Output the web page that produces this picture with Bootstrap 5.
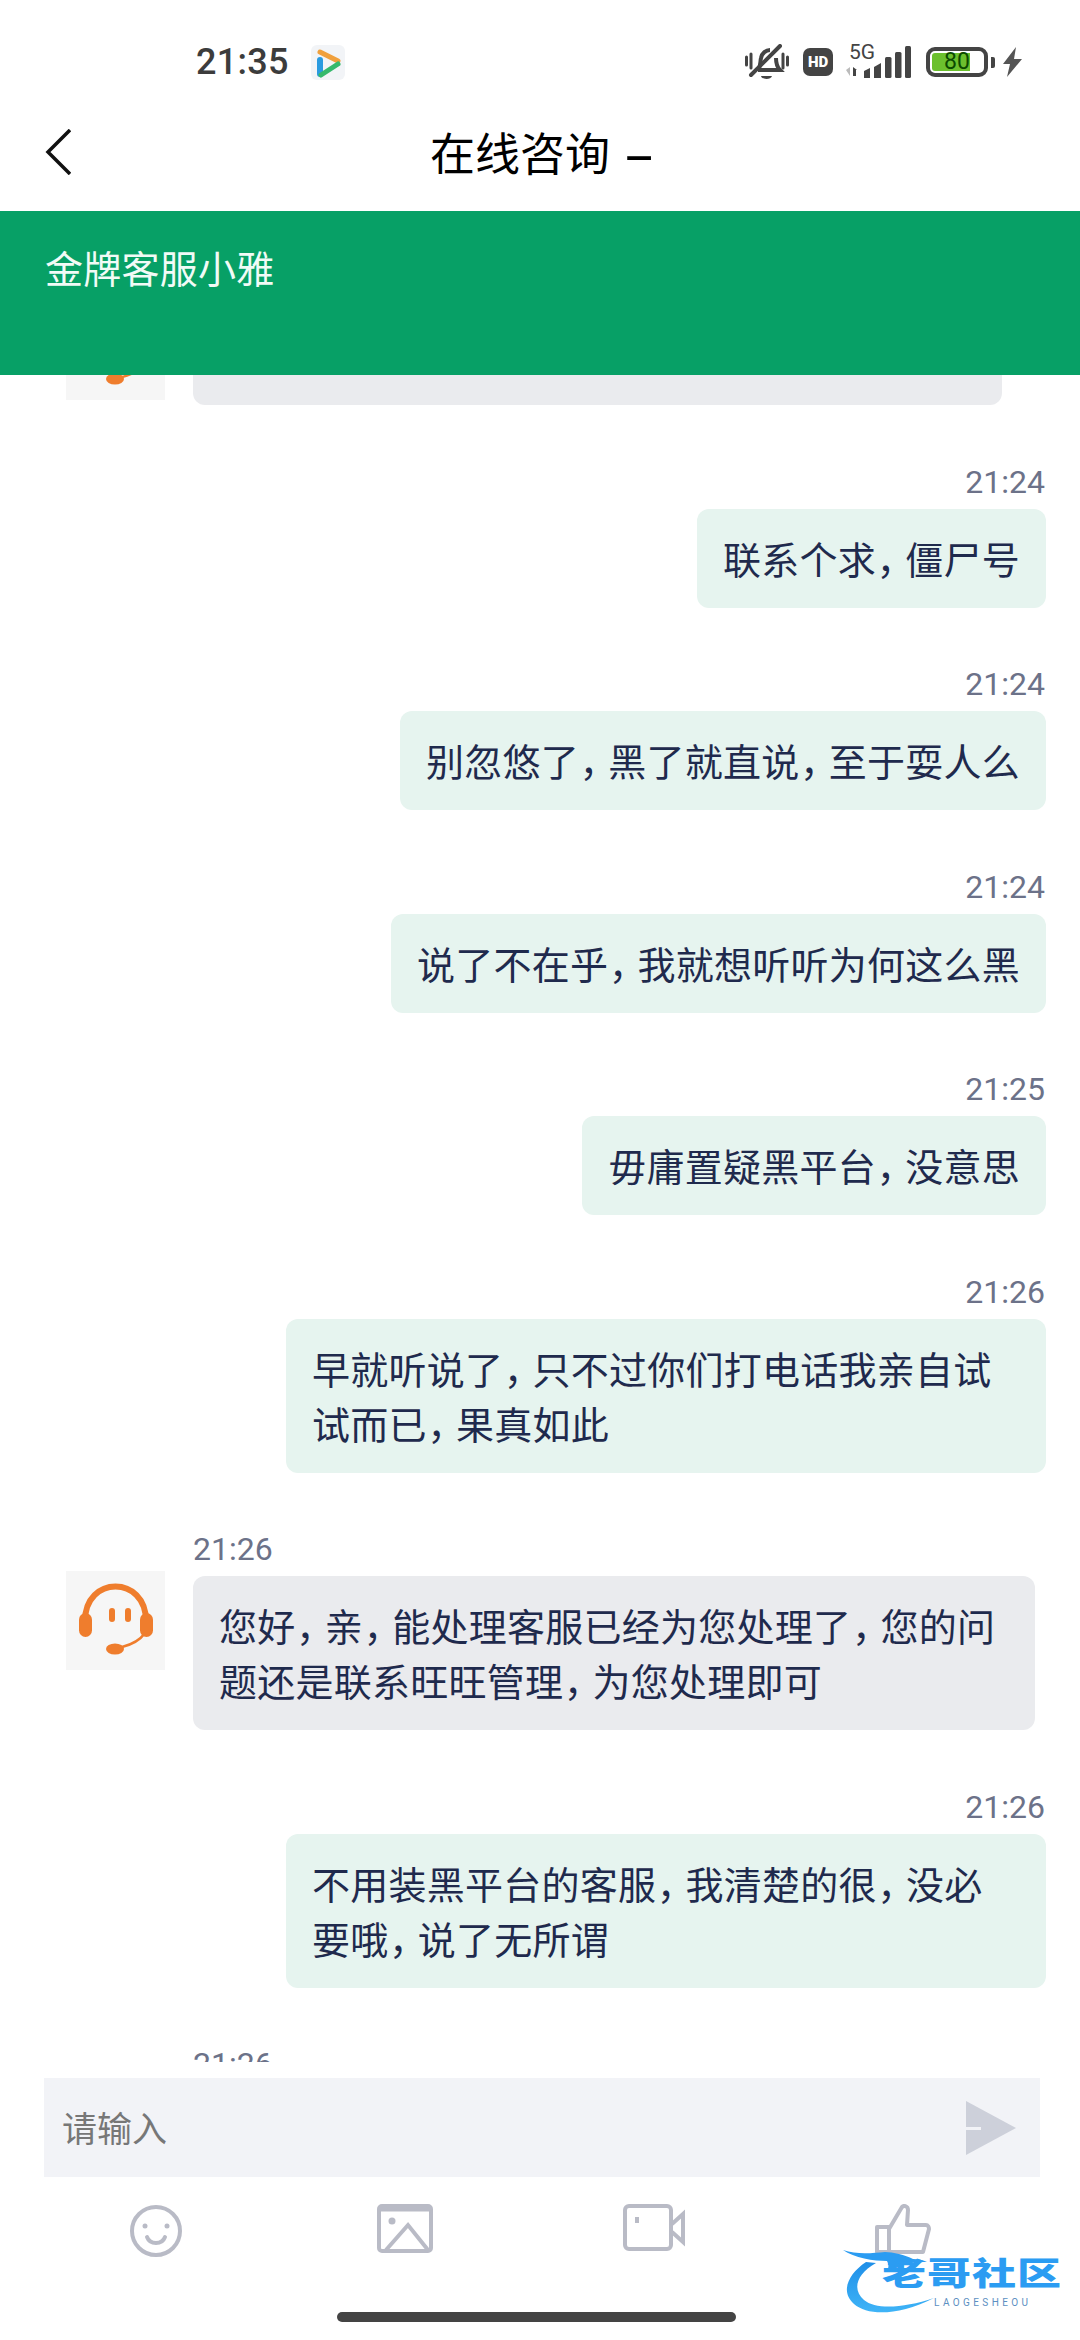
<!DOCTYPE html>
<html lang="zh-CN">
<head>
  <meta charset="UTF-8">
  <meta name="viewport" content="width=device-width, initial-scale=1">
  <title>在线咨询</title>
  <link href="https://cdn.jsdelivr.net/npm/bootstrap@5.3.0/dist/css/bootstrap.min.css" rel="stylesheet">
  <style>
    body { margin: 0; background: #fff; font-family: "Noto Sans CJK SC", "Noto Sans", sans-serif; }
    .phone { width: 1080px; height: 2340px; }
    .status-row { height: 124px; padding: 0 58px 0 196px; color: #3c3c3c; }
    .clock { font: 500 36px/1 Roboto, sans-serif; letter-spacing: .3px; }
    .app-ico { margin-left: 22px; }
    .hd-chip { width: 30px; height: 28px; margin: 0 12px 0 14px; border-radius: 7px; background: #444; color: #fff; font: 900 15px/28px Roboto, sans-serif; text-align: center; }
    .sig-box { width: 66px; height: 34px; }
    .five-g { left: 4px; top: -3px; font: 400 21px/1 Roboto, sans-serif; color: #444; }
    .batt { width: 62px; height: 30px; margin-left: 15px; padding: 2px; border: 4px solid #444; border-radius: 9px; }
    .batt-fill { height: 100%; border-radius: 3px 0 0 3px; background: #6cc02e; }
    .batt-num { left: 0; right: 0; top: 0; font: 400 23px/22px Roboto, sans-serif; color: #0b4a00; text-align: center; }
    .batt-nub { width: 4px; height: 11px; margin: 0 8px 0 3px; border-radius: 0 2px 2px 0; background: #444; }
    .nav-row { height: 87px; padding: 0 45px 31px; }
    .nav-side { width: 26px; }
    .nav-title { font-size: 45px; line-height: 56px; color: #000; }
    .nav-dash { display: inline-block; margin: 0 3px 0 11px; transform: scaleX(2); font-weight: 500; }
    .agent-band { height: 164px; padding: 31px 45px 0; background: #07a066; color: #f1fbf6; font-size: 38px; line-height: 50px; letter-spacing: .25px; }
    .chat { min-height: 0; }
    .msg { margin-bottom: 57.5px; }
    .msg:first-child { margin-top: -115px; }
    .msg-right { padding-right: 34px; }
    .msg-left { padding-left: 66px; gap: 28px; }
    .msg-cut { padding-left: 193px; }
    .stamp { height: 38px; margin-bottom: 8px; padding-right: 1px; font: 400 32px/38px Roboto, sans-serif; color: #6c7289; }
    .bubble { padding: 21px 26px 23px; border-radius: 12px; font-size: 38px; line-height: 55px; letter-spacing: .25px; color: #1f2a4d; font-feature-settings: "palt"; }
    .pun { padding: 0 7px 0 3px; }
    .bubble-out { background: #e6f4ef; }
    .bubble-out-wide { width: 760px; }
    .bubble-in { background: #eaebee; }
    .bubble-in-wide { width: 842px; }
    .bubble-top { width: 809px; }
    .face { width: 99px; height: 99px; margin-top: 41px; background: #f6f6f6; }
    .composer { height: 278px; padding-top: 16px; }
    .input-box { width: 996px; height: 99px; margin-left: 44px; padding: 0 24px 0 18px; background: #f2f3f7; }
    .input-box .form-control { padding: 0; border: 0; border-radius: 0; background: transparent; box-shadow: none; font-size: 35px; color: #333; }
    .input-box .form-control::placeholder { color: #777; opacity: 1; }
    .tools { width: 996px; height: 52px; margin: 27px 0 0 31px; }
    .home-bar { width: 399px; height: 10px; margin: 56px 0 0 337px; border-radius: 5px; background: #444; }
    .wm { left: 842px; top: 2248px; width: 226px; height: 72px; }
    .wm-name { left: 40px; top: 7px; font-size: 44px; line-height: 44px; font-weight: 900; letter-spacing: 1px; color: #2b9cf2; white-space: nowrap; transform: scaleY(.72); transform-origin: top left; }
    .wm-sub { left: 92px; top: 49px; font: 400 10px/11px Roboto, sans-serif; letter-spacing: 3.4px; color: #5d8fc2; white-space: nowrap; }
  </style>
</head>
<body>
  <div class="phone position-relative d-flex flex-column overflow-hidden">

    <div class="status-row d-flex align-items-center flex-shrink-0">
      <span class="clock">21:35</span>
      <svg class="app-ico" width="34" height="35" viewBox="0 0 34 35">
        <rect width="34" height="35" rx="6" fill="#f2f4f7"/>
        <path d="M9 7 27 16" stroke="#f0a03c" stroke-width="5" stroke-linecap="round"/>
        <path d="M9 15V29" stroke="#2a9be0" stroke-width="6" stroke-linecap="round"/>
        <path d="M10 30 27 19" stroke="#35b96c" stroke-width="5" stroke-linecap="round"/>
      </svg>
      <div class="ms-auto d-flex align-items-center">
        <svg width="44" height="37" viewBox="0 0 44 37" fill="none" stroke="#444">
          <path d="M1.5 13v8M6 10v14M38 10v14M42.5 13v8" stroke-width="3" stroke-linecap="round"/>
          <path d="M13 26c3-4 2-8 3-12 1-5 5-8 9-8M31 14c0 5 1 9 4 12H13" stroke-width="4"/>
          <path d="M6 31 35 2" stroke-width="4" stroke-linecap="round"/>
          <path d="M16 32h11c-1 4-10 4-11 0Z" fill="#444" stroke="none"/>
        </svg>
        <div class="hd-chip">HD</div>
        <div class="sig-box position-relative">
          <span class="five-g position-absolute">5G</span>
          <svg class="d-block" width="66" height="34" viewBox="0 0 66 34">
            <path d="M1 25l4-3v9z" fill="#bbb"/>
            <path d="M8 31v-9l4 3h-1v6z" fill="#444"/>
            <g fill="#444">
              <path d="M19 26l6-3v10h-6z"/>
              <path d="M29 22l7-4v15h-7z"/>
              <rect x="40" y="12" width="6.5" height="21" rx="1.5"/>
              <rect x="50" y="7" width="6.5" height="26" rx="1.5"/>
              <rect x="60" y="1" width="6" height="32" rx="1.5"/>
            </g>
          </svg>
        </div>
        <div class="batt position-relative">
          <div class="batt-fill w-75"></div>
          <div class="batt-num position-absolute">80</div>
        </div>
        <div class="batt-nub"></div>
        <svg width="19" height="30" viewBox="0 0 19 30"><path d="M13 0 0 17h7L4 30 19 12h-8z" fill="#555"/></svg>
      </div>
    </div>

    <div class="nav-row d-flex align-items-center flex-shrink-0">
      <svg class="nav-side" width="26" height="46" viewBox="0 0 26 46" fill="none"><path d="M25 1 3 23l22 22" stroke="#111" stroke-width="3.5"/></svg>
      <div class="nav-title flex-grow-1 text-center">在线咨询 <span class="nav-dash">-</span></div>
      <div class="nav-side"></div>
    </div>

    <div class="agent-band flex-shrink-0">金牌客服小雅</div>

    <div class="chat flex-grow-1 overflow-hidden">
      <div class="msg msg-left d-flex">
        <div class="face flex-shrink-0">
          <svg class="d-block" width="99" height="99" viewBox="0 0 99 99"><use href="#agent"/></svg>
        </div>
        <div>
          <div class="stamp">&nbsp;</div>
          <div class="bubble bubble-in bubble-top">&nbsp;</div>
        </div>
      </div>

      <div class="msg msg-right d-flex flex-column align-items-end">
        <div class="stamp">21:24</div>
        <div class="bubble bubble-out">联系个求<span class="pun">，</span>僵尸号</div>
      </div>
      <div class="msg msg-right d-flex flex-column align-items-end">
        <div class="stamp">21:24</div>
        <div class="bubble bubble-out">别忽悠了<span class="pun">，</span>黑了就直说<span class="pun">，</span>至于耍人么</div>
      </div>
      <div class="msg msg-right d-flex flex-column align-items-end">
        <div class="stamp">21:24</div>
        <div class="bubble bubble-out">说了不在乎<span class="pun">，</span>我就想听听为何这么黑</div>
      </div>
      <div class="msg msg-right d-flex flex-column align-items-end">
        <div class="stamp">21:25</div>
        <div class="bubble bubble-out">毋庸置疑黑平台<span class="pun">，</span>没意思</div>
      </div>
      <div class="msg msg-right d-flex flex-column align-items-end">
        <div class="stamp">21:26</div>
        <div class="bubble bubble-out bubble-out-wide">早就听说了<span class="pun">，</span>只不过你们打电话我亲自试<br>试而已<span class="pun">，</span>果真如此</div>
      </div>

      <div class="msg msg-left d-flex">
        <div class="face flex-shrink-0">
          <svg class="d-block" width="99" height="99" viewBox="0 0 99 99">
            <g id="agent">
              <path d="M19 50C19 4 80 4 80 50" fill="none" stroke="#ef7d2d" stroke-width="6"/>
              <rect x="13" y="42" width="13" height="24" rx="6.5" fill="#ef7d2d"/>
              <rect x="74" y="42" width="13" height="24" rx="6.5" fill="#ef7d2d"/>
              <rect x="43" y="37" width="6" height="14" rx="3" fill="#ef7d2d"/>
              <rect x="59" y="37" width="6" height="14" rx="3" fill="#ef7d2d"/>
              <ellipse cx="49" cy="78" rx="9" ry="5.5" fill="#ef7d2d"/>
              <path d="M56 76Q72 72 79 62" fill="none" stroke="#ef7d2d" stroke-width="2.5"/>
            </g>
          </svg>
        </div>
        <div>
          <div class="stamp">21:26</div>
          <div class="bubble bubble-in bubble-in-wide">您好<span class="pun">，</span>亲<span class="pun">，</span>能处理客服已经为您处理了<span class="pun">，</span>您的问<br>题还是联系旺旺管理<span class="pun">，</span>为您处理即可</div>
        </div>
      </div>

      <div class="msg msg-right d-flex flex-column align-items-end">
        <div class="stamp">21:26</div>
        <div class="bubble bubble-out bubble-out-wide">不用装黑平台的客服<span class="pun">，</span>我清楚的很<span class="pun">，</span>没必<br>要哦<span class="pun">，</span>说了无所谓</div>
      </div>

      <div class="msg msg-cut">
        <div class="stamp">21:26</div>
      </div>
    </div>

    <div class="composer flex-shrink-0">
      <div class="input-box d-flex align-items-center">
        <input class="form-control" type="text" placeholder="请输入">
        <svg class="flex-shrink-0" width="50" height="54" viewBox="0 0 50 54">
          <path d="M0 0 50 27 0 54Z" fill="#cdd0da"/>
          <path d="M0 26h15v3H0z" fill="#f2f3f7"/>
        </svg>
      </div>
      <div class="tools row g-0 text-center">
        <div class="col-3">
          <svg width="54" height="54" viewBox="0 0 54 54" fill="none" stroke="#b9bbc6" stroke-width="4">
            <circle cx="27" cy="27" r="24"/>
            <circle cx="16" cy="22" r="2.5" fill="#b9bbc6" stroke="none"/>
            <circle cx="38" cy="22" r="2.5" fill="#b9bbc6" stroke="none"/>
            <path d="M18 33c3 8 15 8 18 0" stroke-linecap="round"/>
          </svg>
        </div>
        <div class="col-3">
          <svg width="56" height="50" viewBox="0 0 56 50" fill="none" stroke="#b9bbc6" stroke-width="4">
            <rect x="2" y="2" width="52" height="45" rx="3"/>
            <path d="M2 5h52" stroke-width="5"/>
            <circle cx="15" cy="17" r="3.5" fill="#b9bbc6" stroke="none"/>
            <path d="M9 46 31 21 51 46"/>
          </svg>
        </div>
        <div class="col-3">
          <svg width="62" height="48" viewBox="0 0 62 48" fill="none" stroke="#b9bbc6" stroke-width="4">
            <rect x="2" y="2" width="46" height="43" rx="4"/>
            <rect x="12" y="13" width="4" height="6" fill="#b9bbc6" stroke="none"/>
            <path d="M49 20 60 10V38L49 28"/>
          </svg>
        </div>
        <div class="col-3">
          <svg width="56" height="50" viewBox="0 0 56 50" fill="none" stroke="#b9bbc6" stroke-width="4" stroke-linejoin="round">
            <path d="M2 23H14V48H2Z"/>
            <path d="M14 25 27 3c2-2 6-1 6 3l-1 15h19c2 0 3 2 3 4l-6 23H14"/>
          </svg>
        </div>
      </div>
      <div class="home-bar"></div>
    </div>

    <div class="wm position-absolute">
      <svg class="position-absolute top-0 start-0" width="226" height="72" viewBox="0 0 226 72">
        <defs>
          <linearGradient id="wmBlue" x1="0" y1="0" x2="0" y2="1">
            <stop offset="0" stop-color="#1f8fe8"/>
            <stop offset="1" stop-color="#3fb4f7"/>
          </linearGradient>
        </defs>
        <path d="M24 14C6 26-2 44 12 56c14 12 44 12 80-6-30 10-58 12-70 2C10 42 14 26 34 15Z" fill="url(#wmBlue)"/>
        <path d="M1 2c14 5 30 3 42 2 8 0 20 3 28 7 6 0 10 1 14 3-10 0-16 1-22 1-6 4-12 7-18 8 2-4 2-7 0-10C32 13 12 10 1 2Z" fill="#2b9cf2"/>
      </svg>
      <div class="wm-name position-absolute">老哥社区</div>
      <div class="wm-sub position-absolute">LAOGESHEOU</div>
    </div>

  </div>

  <script src="https://cdn.jsdelivr.net/npm/bootstrap@5.3.0/dist/js/bootstrap.bundle.min.js"></script>
</body>
</html>
